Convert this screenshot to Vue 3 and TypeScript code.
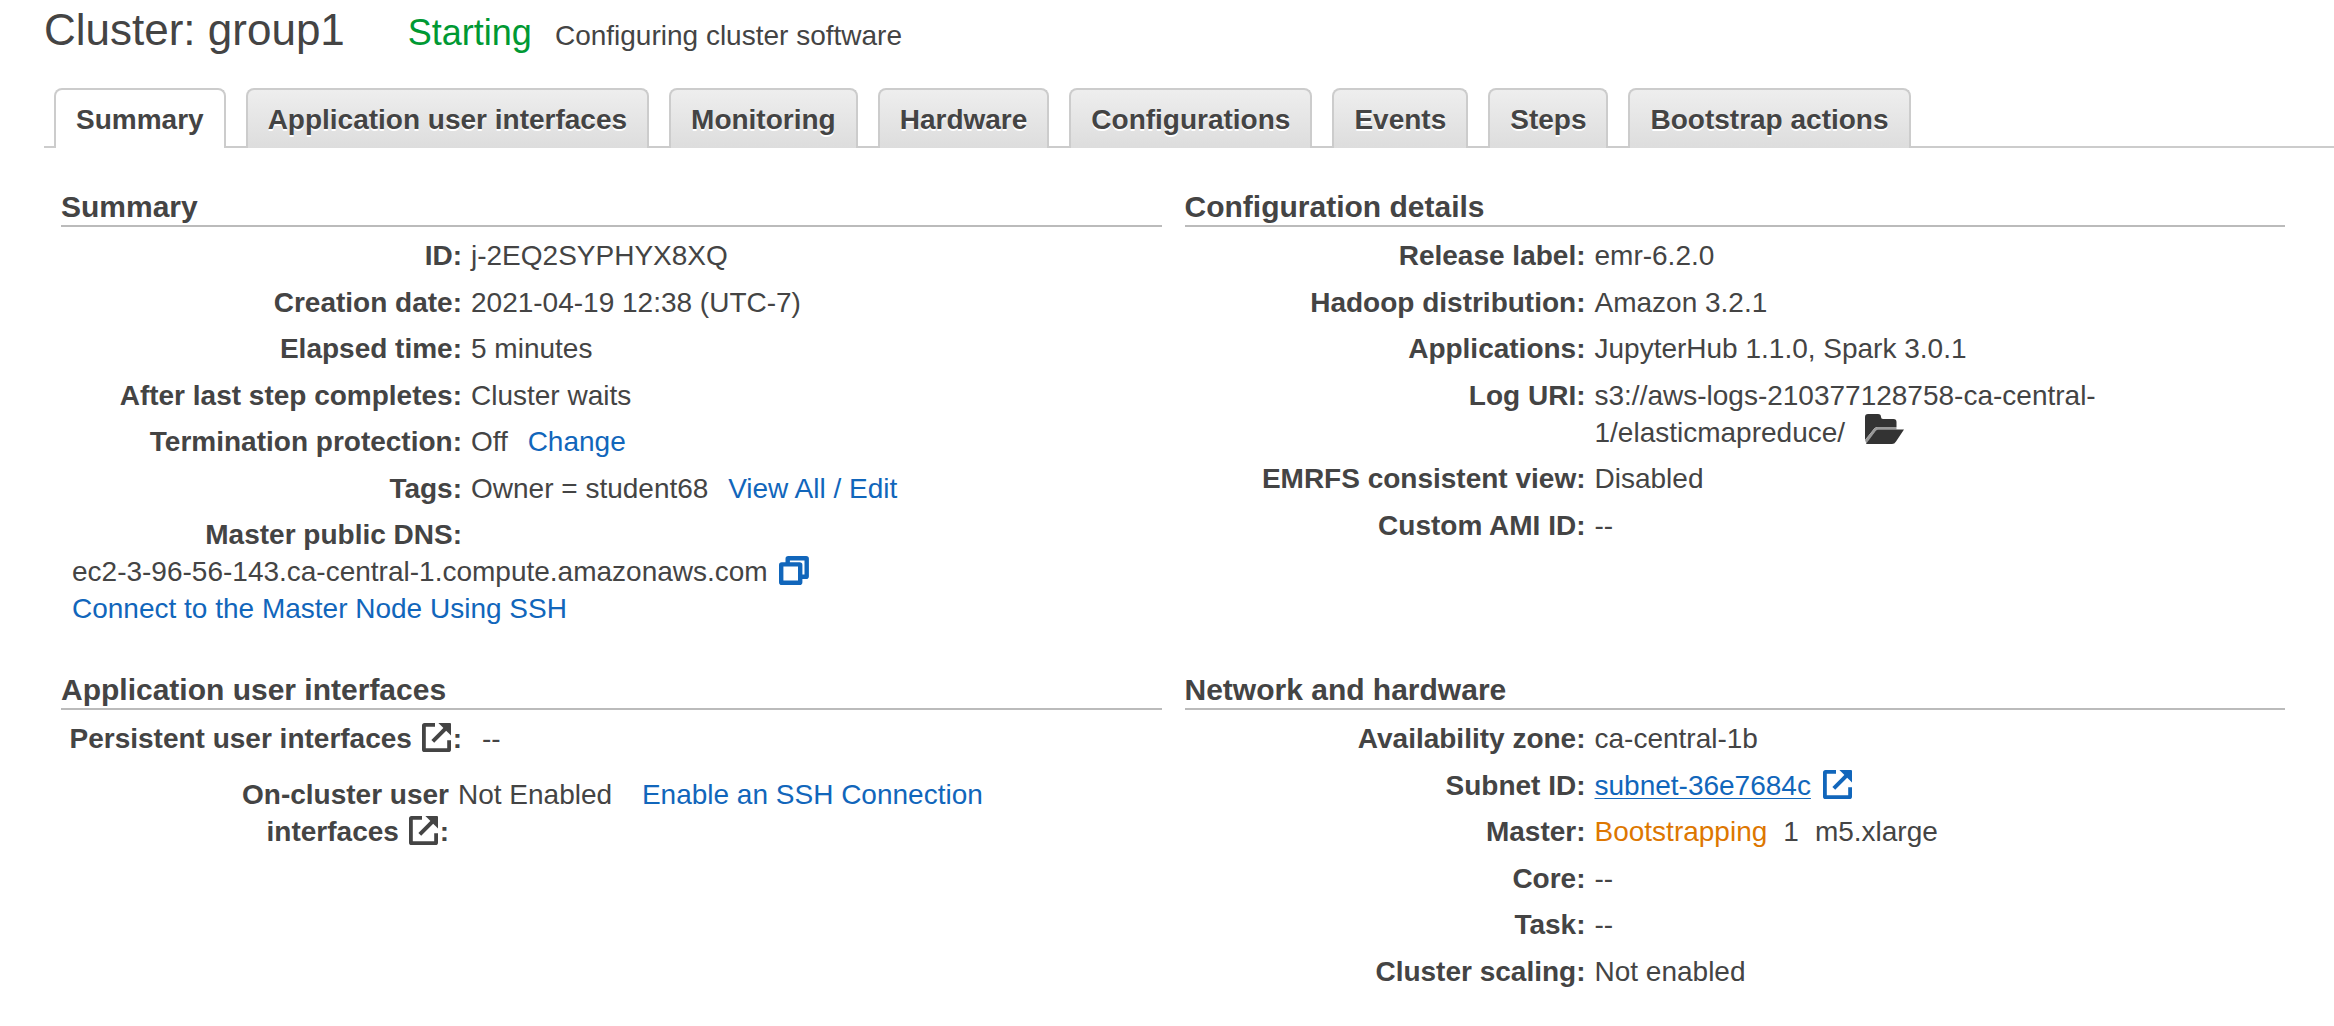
<script setup lang="ts">
import { h, ref } from 'vue'

const tabs: string[] = [
  'Summary',
  'Application user interfaces',
  'Monitoring',
  'Hardware',
  'Configurations',
  'Events',
  'Steps',
  'Bootstrap actions',
]
const activeTab = ref('Summary')

const ExternalIcon = () =>
  h('svg', { width: 29, height: 29, viewBox: '0 0 29 29', fill: 'none', 'aria-hidden': 'true' }, [
    h('path', {
      d: 'M13 1.9H2.6a.7.7 0 0 0-.7.7V26.4a.7.7 0 0 0 .7.7H26.4a.7.7 0 0 0 .7-.7V17.3',
      stroke: 'currentColor',
      'stroke-width': 3.8,
    }),
    h('path', { d: 'M10.8 18.4L24 5.2', stroke: 'currentColor', 'stroke-width': 4 }),
    h('path', { d: 'M16.4 0H28a1 1 0 0 1 1 1V12.6z', fill: 'currentColor' }),
  ])
</script>

<template>
  <main class="page">
    <header class="title-bar">
      <h1>Cluster: group1</h1>
      <span class="state">Starting</span>
      <span class="detail">Configuring cluster software</span>
    </header>

    <div class="tabs" role="tablist">
      <button
        v-for="tab in tabs"
        :key="tab"
        type="button"
        role="tab"
        class="tab"
        :class="{ active: tab === activeTab }"
        :aria-selected="tab === activeTab"
        @click="activeTab = tab"
      >{{ tab }}</button>
    </div>

    <div class="sections">
      <section>
        <h2>Summary</h2>
        <dl>
          <div class="row"><dt>ID:</dt><dd>j-2EQ2SYPHYX8XQ</dd></div>
          <div class="row"><dt>Creation date:</dt><dd>2021-04-19 12:38 (UTC-7)</dd></div>
          <div class="row"><dt>Elapsed time:</dt><dd>5 minutes</dd></div>
          <div class="row"><dt>After last step completes:</dt><dd>Cluster waits</dd></div>
          <div class="row"><dt>Termination protection:</dt><dd>Off <a class="action" href="#">Change</a></dd></div>
          <div class="row"><dt>Tags:</dt><dd>Owner = student68 <a class="action" href="#">View All / Edit</a></dd></div>
          <div class="row dns">
            <dt>Master public DNS:</dt>
            <dd>
              ec2-3-96-56-143.ca-central-1.compute.amazonaws.com
              <button type="button" class="copy" aria-label="Copy DNS name">
                <svg width="30" height="29" viewBox="0 0 30 29" fill="none" stroke="currentColor" aria-hidden="true">
                  <rect x="8.7" y="2.2" width="19" height="18.6" rx=".6" stroke-width="4.4" />
                  <rect x="2.2" y="8.4" width="19" height="18.4" rx=".6" fill="#fff" stroke-width="4.4" />
                </svg>
              </button>
              <br>
              <a href="#">Connect to the Master Node Using SSH</a>
            </dd>
          </div>
        </dl>
      </section>

      <section>
        <h2>Configuration details</h2>
        <dl>
          <div class="row"><dt>Release label:</dt><dd>emr-6.2.0</dd></div>
          <div class="row"><dt>Hadoop distribution:</dt><dd>Amazon 3.2.1</dd></div>
          <div class="row"><dt>Applications:</dt><dd>JupyterHub 1.1.0, Spark 3.0.1</dd></div>
          <div class="row">
            <dt>Log URI:</dt>
            <dd class="uri">
              s3://aws-logs-210377128758-ca-central-<wbr>1/elasticmapreduce/
              <svg class="folder" width="39" height="30" viewBox="0 0 39 30" fill="#333" aria-hidden="true">
                <path d="M0 3Q0 0 3 0H13Q16 0 16 3Q16 5 18 5H28.500Q31.500 5 31.500 8V13H12.500Q10.500 13 9.300 14.600L0 26z" />
                <path d="M0 26L9.300 14.600Q10.500 13 12.500 13H31.500V15.500H13Q11.500 15.500 10.500 17L1.500 30z" fill="#999" />
                <path d="M1 30L10.500 17Q11.500 15.500 13 15.500H39L31 27.500Q29.500 30 27 30z" />
              </svg>
            </dd>
          </div>
          <div class="row"><dt>EMRFS consistent view:</dt><dd>Disabled</dd></div>
          <div class="row"><dt>Custom AMI ID:</dt><dd>--</dd></div>
        </dl>
      </section>

      <section>
        <h2>Application user interfaces</h2>
        <dl class="interfaces">
          <div class="row persistent">
            <dt>Persistent user interfaces <ExternalIcon class="icon" />:</dt>
            <dd>--</dd>
          </div>
          <div class="row on-cluster">
            <dt>On-cluster user<br>interfaces <ExternalIcon class="icon" />:</dt>
            <dd>Not Enabled <a class="enable" href="#">Enable an SSH Connection</a></dd>
          </div>
        </dl>
      </section>

      <section>
        <h2>Network and hardware</h2>
        <dl>
          <div class="row"><dt>Availability zone:</dt><dd>ca-central-1b</dd></div>
          <div class="row">
            <dt>Subnet ID:</dt>
            <dd><a href="#"><span class="underlined">subnet-36e7684c</span> <ExternalIcon class="icon link-icon" /></a></dd>
          </div>
          <div class="row">
            <dt>Master:</dt>
            <dd class="master"><span class="pending">Bootstrapping</span><span>1</span><span>m5.xlarge</span></dd>
          </div>
          <div class="row"><dt>Core:</dt><dd>--</dd></div>
          <div class="row"><dt>Task:</dt><dd>--</dd></div>
          <div class="row"><dt>Cluster scaling:</dt><dd>Not enabled</dd></div>
        </dl>
      </section>
    </div>
  </main>
</template>

<style>
body {
  background: #fff;
}
</style>

<style scoped>
.page {
  padding: 5px 0 24px;
  color: #444;
  font: 28px/37px "Liberation Sans", Arial, sans-serif;
}

.title-bar {
  display: flex;
  align-items: baseline;
  padding-left: 44px;
}

h1 {
  margin: 0 63px 0 0;
  font-size: 44px;
  font-weight: 400;
  line-height: 50px;
}

.state {
  margin-right: 23px;
  color: #093;
  font-size: 36px;
}

.tabs {
  display: flex;
  gap: 20px;
  margin: 33px 0 41px 44px;
  padding-left: 10px;
  background: linear-gradient(#ccc, #ccc) bottom / 100% 2px no-repeat;
}

.tab {
  height: 60px;
  padding: 0 20px;
  border: 2px solid #ccc;
  border-bottom: 0;
  border-radius: 8px 8px 0 0;
  background: linear-gradient(#eee, #ddd);
  color: #444;
  font: bold 28px/37px "Liberation Sans", Arial, sans-serif;
  text-shadow: 0 2px 0 #fff;
  white-space: nowrap;
  cursor: pointer;
}

.tab.active {
  background: #fff;
}

.sections {
  display: grid;
  grid-template-columns: 1fr 1fr;
  gap: 45px 23px;
  margin: 0 49px 0 61px;
}

h2 {
  margin: 0 0 10px;
  border-bottom: 2px solid #bbb;
  font-size: 30px;
  line-height: 36px;
}

dl,
dd {
  margin: 0;
}

.row {
  display: grid;
  grid-template-columns: 401px 1fr;
  column-gap: 9px;
  margin-bottom: 10px;
}

.row:nth-child(even) {
  margin-bottom: 9px;
}

.row:last-child {
  margin-bottom: 0;
}

dt {
  font-weight: 700;
  text-align: right;
}

a {
  color: #16b;
  text-decoration: none;
}

.action {
  margin-left: 12px;
}

.enable {
  margin-left: 22px;
}

.dns dd {
  grid-column: 1 / -1;
  padding-left: 11px;
}

.copy {
  display: inline-block;
  margin: -4px 0 -4px 4px;
  padding: 0;
  border: 0;
  background: none;
  color: #16b;
  line-height: 0;
  vertical-align: -4px;
  cursor: pointer;
}

.copy svg {
  display: block;
}

.uri {
  max-width: 560px;
}

.folder {
  margin: -4px 0 0 12px;
  vertical-align: -2px;
}

.icon {
  margin: 0 2px;
  vertical-align: -4px;
}

.link-icon {
  margin-left: 4px;
}

.underlined {
  text-decoration: underline 1px;
  text-underline-offset: 3px;
}

.interfaces .row {
  margin-bottom: 19px;
}

.persistent {
  column-gap: 20px;
}

.on-cluster {
  grid-template-columns: 388px 1fr;
}

.master {
  display: flex;
  gap: 16px;
}

.pending {
  color: #d70;
}
</style>
